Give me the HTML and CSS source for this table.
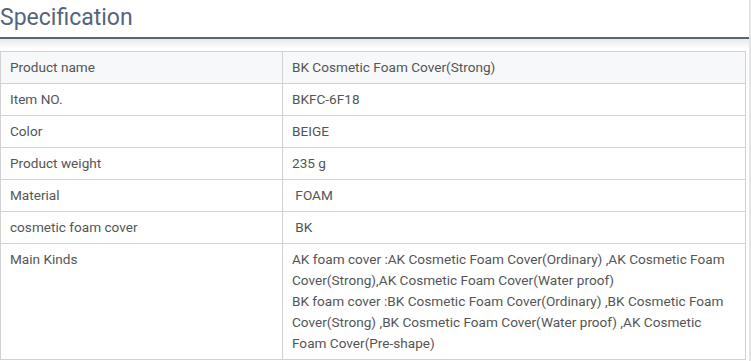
FILE: index.html
```html
<!DOCTYPE html>
<html>
<head>
<meta charset="utf-8">
<link rel="stylesheet" href="styles.css">
</head>
<body>
<div class="page">
  <div class="main">
    <h2 class="title">Specification</h2>
    <div class="shade"></div>
    <table class="spec">
      <tr class="first"><td class="k">Product name</td><td>BK Cosmetic Foam Cover(Strong)</td></tr>
      <tr><td class="k">Item NO.</td><td>BKFC-6F18</td></tr>
      <tr><td class="k">Color</td><td>BEIGE</td></tr>
      <tr><td class="k">Product weight</td><td>235 g</td></tr>
      <tr><td class="k">Material</td><td>&nbsp;FOAM</td></tr>
      <tr><td class="k">cosmetic foam cover</td><td>&nbsp;BK</td></tr>
      <tr><td class="k">Main Kinds</td><td>AK foam cover :AK Cosmetic Foam Cover(Ordinary) ,AK Cosmetic Foam Cover(Strong),AK Cosmetic Foam Cover(Water proof)<br>BK foam cover :BK Cosmetic Foam Cover(Ordinary) ,BK Cosmetic Foam Cover(Strong) ,BK Cosmetic Foam Cover(Water proof) ,AK Cosmetic<br>Foam Cover(Pre-shape)</td></tr>
    </table>
  </div>
  <div class="edge"></div>
</div>
</body>
</html>
```

FILE: styles.css
```css
html, body {
  margin: 0;
  padding: 0;
  background: #fff;
}
body {
  font-family: Roboto, "Liberation Sans", sans-serif;
  overflow: hidden;
}
.page {
  display: flex;
  width: 751px;
  height: 361px;
}
.main {
  width: 749px;
}
.edge {
  width: 2px;
  background: #e4e4e8;
}
.title {
  margin: 0;
  height: 39px;
  box-sizing: border-box;
  padding: 4px 0 0 0;
  font-size: 23px;
  font-weight: 400;
  line-height: 28px;
  color: #55657d;
  border-bottom: 2px solid #566579;
}
.shade {
  height: 12px;
  background: linear-gradient(#e9e9e9, #ffffff 85%);
}
.spec {
  border-collapse: collapse;
  width: 746px;
  font-size: 13.6px;
  color: #555555;
}
.spec td {
  border: 1px solid #d2d2d2;
  padding: 5px 4px 5px 9px;
  line-height: 21px;
  height: 21px;
  vertical-align: top;
}
.spec td.k {
  width: 268px;
}
.spec tr.first td {
  background: #f7f8fa;
}
```
